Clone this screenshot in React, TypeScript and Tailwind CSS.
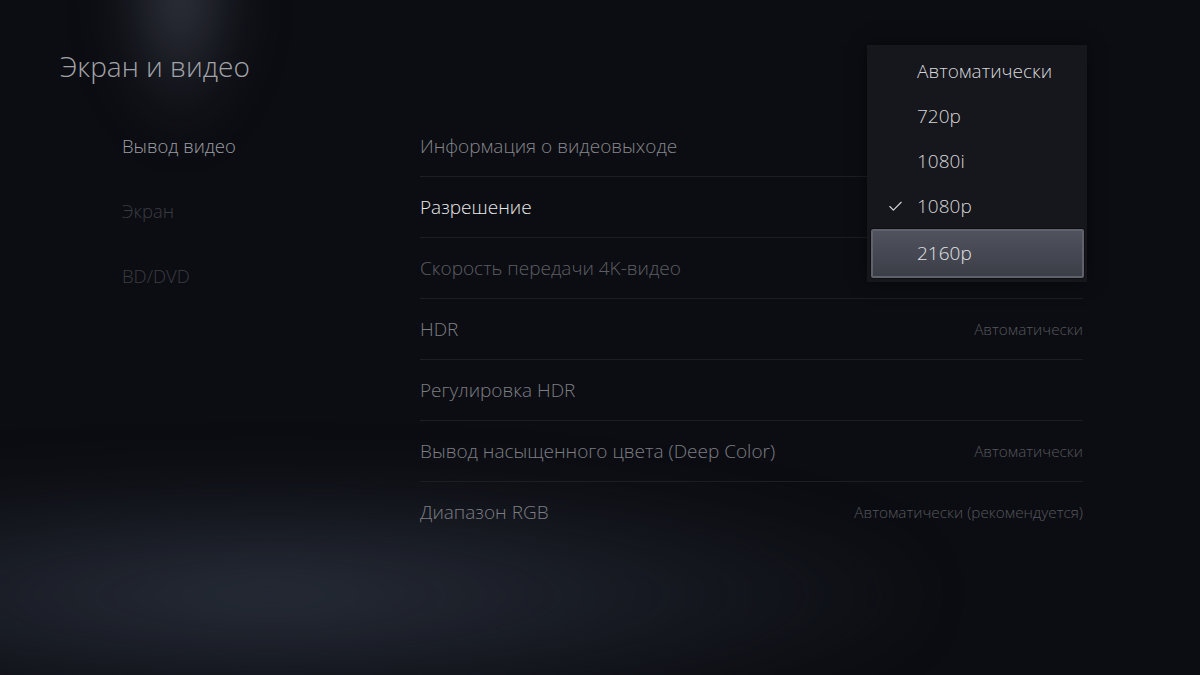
import { Check } from 'lucide-react';

const rows = [
  { label: 'Информация о видеовыходе', tone: 'text-[#85868c]' },
  { label: 'Разрешение', tone: 'text-[#e8e8ea]' },
  { label: 'Скорость передачи 4K-видео', tone: 'text-[#5c5d63]' },
  { label: 'HDR', tone: 'text-[#7c7d83]', value: 'Автоматически' },
  { label: 'Регулировка HDR', tone: 'text-[#7c7d83]' },
  { label: 'Вывод насыщенного цвета (Deep Color)', tone: 'text-[#7c7d83]', value: 'Автоматически' },
  { label: 'Диапазон RGB', tone: 'text-[#7c7d83]', value: 'Автоматически (рекомендуется)' },
];

const nav = [
  { label: 'Вывод видео', tone: 'text-[#9c9da3]' },
  { label: 'Экран', tone: 'text-[#3b3c42]' },
  { label: 'BD/DVD', tone: 'text-[#3b3c42]' },
];

const options = ['Автоматически', '720p', '1080i', '1080p'];

export default function App() {
  return (
    <div className="relative w-[1200px] h-[675px] overflow-hidden bg-[#0c0d12] font-['Open_Sans','Noto_Sans',sans-serif] font-light">
      {/* spotlight beam + floor haze */}
      <div className="absolute -top-[80px] left-[60px] w-[240px] h-[320px] rounded-full blur-[18px] bg-[radial-gradient(ellipse_45%_60%_at_50%_25%,rgba(110,115,135,0.38),rgba(45,49,62,0.14)_55%,transparent_80%)]" />
      <div className="absolute top-[470px] -left-[380px] w-[1300px] h-[250px] rounded-full blur-[24px] bg-[radial-gradient(ellipse_at_center,rgba(44,50,63,0.85),rgba(28,32,42,0.5)_50%,transparent_75%)]" />

      <div className="relative flex flex-col">
        <h1 className="pl-[60px] pt-[48px] text-[28px] leading-[36px] text-[#a2a3a8]">Экран и видео</h1>

        <div className="flex mt-[32px]">
          <nav className="pl-[122px] w-[420px] flex flex-col -mt-[3px]">
            {nav.map((n) => (
              <div key={n.label} className={`h-[65px] flex items-center text-[18.5px] ${n.tone}`}>
                {n.label}
              </div>
            ))}
          </nav>

          <div className="w-[663px] flex flex-col">
            {rows.map((r, i) => (
              <div
                key={r.label}
                className={`h-[61px] flex items-center justify-between ${i < rows.length - 1 ? 'border-b border-[#1d1e24]' : ''}`}
              >
                <span className={`text-[19px] ${r.tone}`}>{r.label}</span>
                {r.value && <span className="text-[15.3px] text-[#55565c]">{r.value}</span>}
              </div>
            ))}
          </div>
        </div>
      </div>

      {/* resolution dropdown */}
      <div className="absolute left-[867px] top-[45px] w-[220px] py-[4px] bg-[#16171c] shadow-[0_0_16px_rgba(0,0,0,0.5)] flex flex-col">
        {options.map((o) => (
          <div key={o} className="relative h-[45px] flex items-center pl-[50px] text-[19px] text-[#d6d6da]">
            {o === '1080p' && <Check size={17} strokeWidth={1.6} className="absolute left-[20px] text-[#d6d6da]" />}
            {o}
          </div>
        ))}
        <div className="ml-[4px] mr-[3px] h-[49px] flex items-center pl-[44px] text-[19px] text-[#e2e2e6] rounded-[2px] border-2 border-[#5f616b] bg-[linear-gradient(180deg,#50525e,#3b3d47)] shadow-[0_0_0_1px_#0e0f13]">
          2160p
        </div>
      </div>
    </div>
  );
}
